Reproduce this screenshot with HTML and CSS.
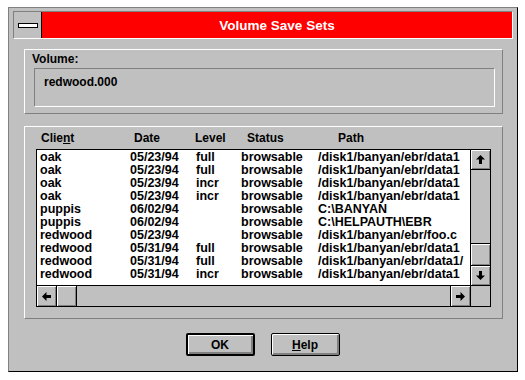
FILE: index.html
```html
<!DOCTYPE html>
<html>
<head>
<meta charset="UTF-8">
<title>Volume Save Sets</title>
<link rel="stylesheet" href="styles.css">
</head>
<body>
    <div id="window">
        <div id="titlebar">
            <div id="sysmenu"><span class="dash"></span></div>
            <div id="caption">Volume Save Sets</div>
        </div>
        <div id="client-area">
            <div id="volume-group" class="groupbox">
                <p class="group-label">Volume:</p>
                <div id="volume-field">redwood.000</div>
            </div>
            <div id="list-group" class="groupbox">
                <div id="list-header">
                    <span>Clie<u>n</u>t</span>
                    <span>Date</span>
                    <span>Level</span>
                    <span>Status</span>
                    <span>Path</span>
                </div>
                <div id="listbox">
                    <div id="rows">
                        <div class="row"><span>oak</span><span>05/23/94</span><span>full</span><span>browsable</span><span>/disk1/banyan/ebr/data1</span></div>
                        <div class="row"><span>oak</span><span>05/23/94</span><span>full</span><span>browsable</span><span>/disk1/banyan/ebr/data1</span></div>
                        <div class="row"><span>oak</span><span>05/23/94</span><span>incr</span><span>browsable</span><span>/disk1/banyan/ebr/data1</span></div>
                        <div class="row"><span>oak</span><span>05/23/94</span><span>incr</span><span>browsable</span><span>/disk1/banyan/ebr/data1</span></div>
                        <div class="row"><span>puppis</span><span>06/02/94</span><span></span><span>browsable</span><span>C:\BANYAN</span></div>
                        <div class="row"><span>puppis</span><span>06/02/94</span><span></span><span>browsable</span><span>C:\HELPAUTH\EBR</span></div>
                        <div class="row"><span>redwood</span><span>05/23/94</span><span></span><span>browsable</span><span>/disk1/banyan/ebr/foo.c</span></div>
                        <div class="row"><span>redwood</span><span>05/31/94</span><span>full</span><span>browsable</span><span>/disk1/banyan/ebr/data1</span></div>
                        <div class="row"><span>redwood</span><span>05/31/94</span><span>full</span><span>browsable</span><span>/disk1/banyan/ebr/data1/</span></div>
                        <div class="row"><span>redwood</span><span>05/31/94</span><span>incr</span><span>browsable</span><span>/disk1/banyan/ebr/data1</span></div>
                    </div>
                    <div id="vscroll">
                        <div class="sb-btn sb-up">
                            <svg width="9" height="9" viewBox="0 0 9 9"><polygon points="4.5,0 9,4.5 6,4.5 6,9 3,9 3,4.5 0,4.5" fill="#000"/></svg>
                        </div>
                        <div class="sb-track"></div>
                        <div class="sb-thumb sb-vthumb"></div>
                        <div class="sb-btn sb-down">
                            <svg width="9" height="9" viewBox="0 0 9 9"><polygon points="4.5,9 9,4.5 6,4.5 6,0 3,0 3,4.5 0,4.5" fill="#000"/></svg>
                        </div>
                    </div>
                    <div id="hscroll">
                        <div class="sb-btn sb-left">
                            <svg width="9" height="9" viewBox="0 0 9 9"><polygon points="0,4.5 4.5,0 4.5,3 9,3 9,6 4.5,6 4.5,9" fill="#000"/></svg>
                        </div>
                        <div class="sb-thumb sb-hthumb"></div>
                        <div class="sb-track"></div>
                        <div class="sb-btn sb-right">
                            <svg width="9" height="9" viewBox="0 0 9 9"><polygon points="9,4.5 4.5,0 4.5,3 0,3 0,6 4.5,6 4.5,9" fill="#000"/></svg>
                        </div>
                    </div>
                    <div id="corner"></div>
                </div>
            </div>
            <div id="button-row">
                <button type="button" class="push default">OK</button>
                <button type="button" class="push"><u>H</u>elp</button>
            </div>
        </div>
    </div>
</body>
</html>
```

FILE: styles.css
```css
* {
margin: 0;
padding: 0;
border: 0;
box-sizing: border-box;
}

html, body {
background-color: #ffffff;
font-family: "Liberation Sans", Arial, sans-serif;
font-weight: bold;
font-size: 12px;
color: #000;
}

#window {
margin: 7px 0 0 8px;
width: 510px;
height: 365px;
background-color: #c0c0c0;
border: 1px solid;
border-color: #808080 #000 #000 #808080;
padding: 3px 4px 0 4px;
display: flex;
flex-direction: column;
}

#titlebar {
display: flex;
height: 28px;
border-top: 1px solid #808080;
border-left: 1px solid #808080;
border-bottom: 1px solid #ffffff;
border-right: 1px solid #ffffff;
}

#sysmenu {
width: 28px;
background-color: #c0c0c0;
border-right: 1px solid #000;
display: flex;
align-items: center;
justify-content: center;
}

.dash {
display: block;
width: 20px;
height: 5px;
background-color: #ffffff;
border: 1px solid #000;
margin-top: 1px;
}

#caption {
flex: 1;
background-color: #ff0000;
color: #ffffff;
font-size: 13.5px;
display: flex;
align-items: center;
justify-content: center;
}

#client-area {
flex: 1;
display: flex;
flex-direction: column;
padding: 10px 10px 0 11px;
}

.groupbox {
border: 1px solid;
border-color: #ffffff #808080 #808080 #ffffff;
}

#volume-group {
height: 65px;
padding: 2px 7px 0 7px;
}

.group-label {
line-height: 14px;
margin-bottom: 2px;
}

#volume-field {
height: 39px;
margin-left: 2px;
border: 1px solid;
border-color: #808080 #ffffff #ffffff #808080;
padding: 6px 0 0 9px;
line-height: 14px;
}

#list-group {
margin-top: 12px;
height: 193px;
padding: 4px 0 0 11px;
}

#list-header {
display: grid;
grid-template-columns: 93px 61px 52px 91px auto;
padding-left: 5px;
line-height: 14px;
margin-bottom: 4px;
}

#listbox {
width: 455px;
height: 158px;
border: 1px solid #000;
display: grid;
grid-template-columns: 433px 20px;
grid-template-rows: 135px 21px;
}

#rows {
background-color: #ffffff;
overflow: hidden;
padding-top: 1px;
}

.row {
display: grid;
grid-template-columns: 90px 66px 45px 77px auto;
padding-left: 3px;
font-size: 12.5px;
line-height: 13px;
height: 13px;
white-space: nowrap;
}

#vscroll {
border-left: 1px solid #000;
display: flex;
flex-direction: column;
background-color: #c0c0c0;
}

#hscroll {
border-top: 1px solid #000;
display: flex;
background-color: #c0c0c0;
}

#corner {
border-top: 1px solid #000;
border-left: 1px solid #000;
background-color: #c0c0c0;
}

.sb-btn, .sb-thumb {
background-color: #c0c0c0;
box-shadow: inset 1px 1px #ffffff, inset -1px -1px #808080;
display: flex;
align-items: center;
justify-content: center;
}

.sb-track {
flex: 1;
}

.sb-up {
height: 20px;
border-bottom: 1px solid #000;
}

.sb-vthumb {
height: 22px;
border-top: 1px solid #000;
}

.sb-down {
height: 20px;
border-top: 1px solid #000;
}

.sb-left {
width: 20px;
border-right: 1px solid #000;
}

.sb-hthumb {
width: 20px;
border-right: 1px solid #000;
}

.sb-right {
width: 20px;
border-left: 1px solid #000;
}

#button-row {
display: flex;
justify-content: center;
gap: 16px;
margin-top: 14px;
padding-right: 2px;
}

.push {
width: 69px;
height: 23px;
background-color: #c0c0c0;
border: 1px solid #000;
border-radius: 2px;
box-shadow: inset 1px 1px #ffffff, inset -2px -2px #808080;
font-family: "Liberation Sans", Arial, sans-serif;
font-weight: bold;
font-size: 12px;
color: #000;
}

.push.default {
border-width: 2px;
}
```
